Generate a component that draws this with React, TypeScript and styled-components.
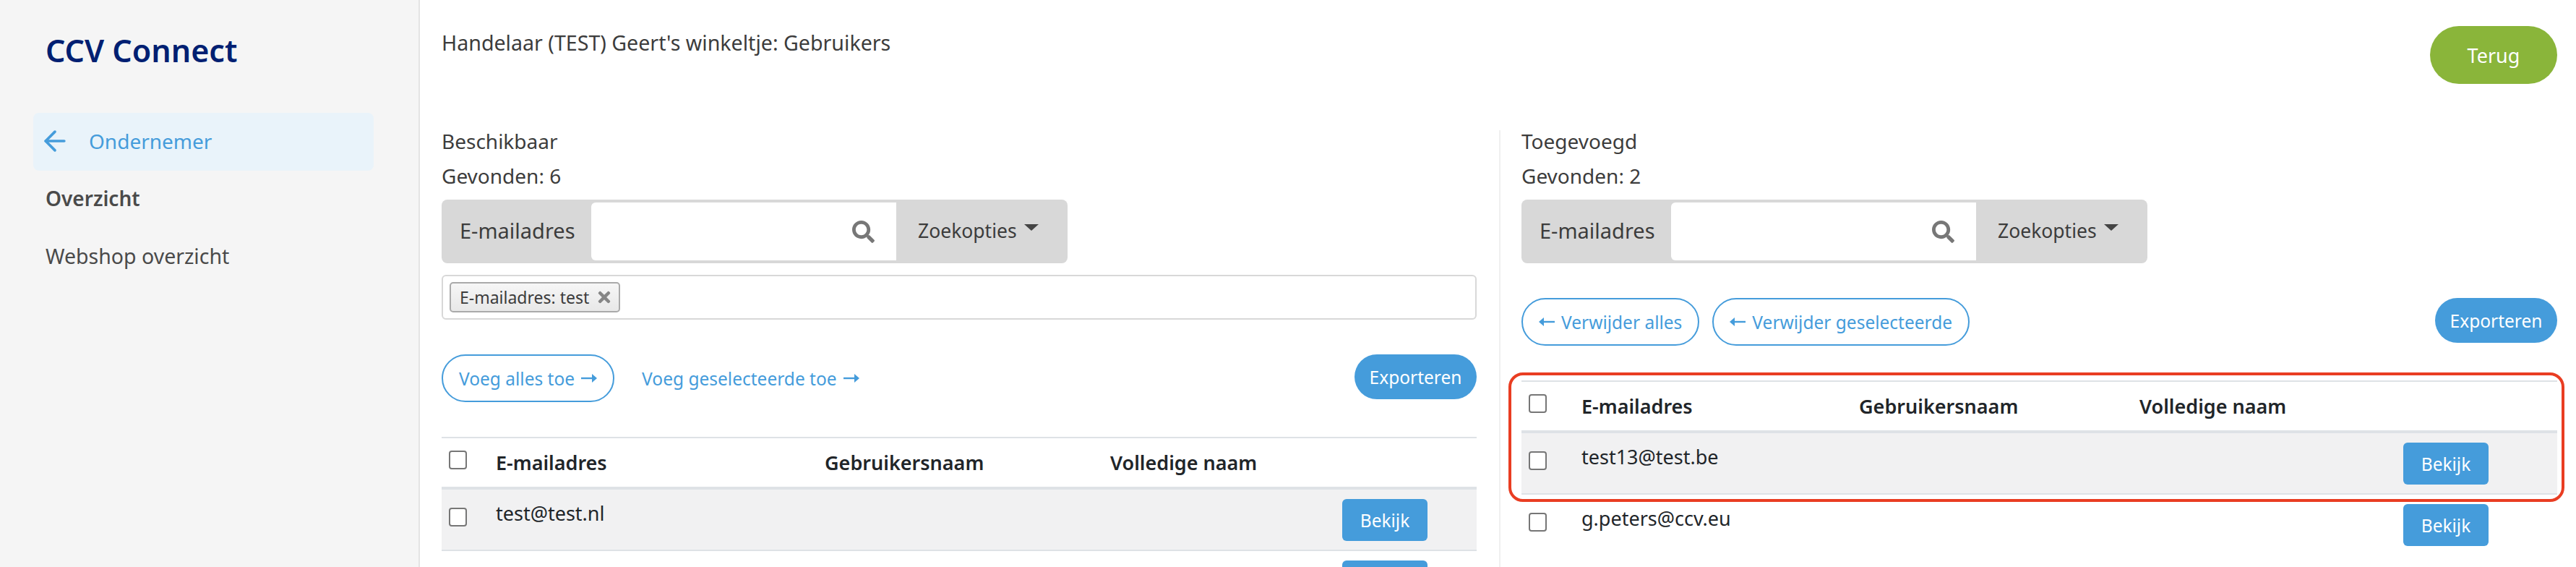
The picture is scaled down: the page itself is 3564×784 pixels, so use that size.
import React from 'react'
import styled, { createGlobalStyle } from 'styled-components'
import { FaSearch, FaTimes } from 'react-icons/fa'
import { ArrowLeft } from 'lucide-react'

const GlobalStyle = createGlobalStyle`
  * { box-sizing: border-box; }
  html, body { margin: 0; height: 100%; overflow: hidden; background: #fff; }
  body { font-family: "Noto Sans", "Open Sans", sans-serif; font-size: 28px; color: #3c3c3c; }
`

const Page = styled.div`
  display: flex;
  width: 3564px;
  height: 784px;
  overflow: hidden;
`

const Sidebar = styled.aside`
  flex: 0 0 581px;
  background: #f5f5f5;
  border-right: 2px solid #e4e4e4;
  padding: 45px 62px 0 46px;
  color: #4a4a4a;
`

const Brand = styled.h1`
  margin: 0 0 61px 17px;
  height: 50px;
  line-height: 50px;
  font-size: 43px;
  font-weight: 600;
  color: #001f72;
`

const BackItem = styled.div`
  display: flex;
  align-items: center;
  gap: 25px;
  height: 80px;
  padding: 0 0 3px 8px;
  border-radius: 8px;
  background: #e9f3fa;
  color: #459cdb;
`

const NavItem = styled.div<{ $bold?: boolean }>`
  height: 80px;
  line-height: 77px;
  padding-left: 17px;
  font-size: ${p => (p.$bold ? 28 : 28.5)}px;
  font-weight: ${p => (p.$bold ? 600 : 400)};
`

const Main = styled.main`
  flex: 1;
  padding: 36px 26px 0 30px;
`

const Header = styled.div`
  display: flex;
  justify-content: space-between;
  align-items: flex-start;
  height: 144px;
`

const Title = styled.div`
  padding-top: 4px;
  line-height: 38px;
  font-size: 28.6px;
`

const PrimaryPill = styled.button`
  width: 176px;
  height: 80px;
  border: 0;
  border-radius: 40px;
  background: #8ab53a;
  color: #fff;
  font: inherit;
  font-size: 27px;
`

const Columns = styled.div`
  display: flex;
  height: 604px;
`

const Panel = styled.section<{ $side: 'left' | 'right' }>`
  width: ${p => (p.$side === 'left' ? '1432px' : '1464px')};
  ${p => p.$side === 'left' && 'margin-right: 31px;'}
  ${p => p.$side === 'right' && 'border-left: 2px solid #f0f0f0; padding-left: 29px;'}
`

const Info = styled.div`
  height: 30px;
  line-height: 30px;
  margin-bottom: 18px;
`

const SearchGroup = styled.div`
  display: flex;
  align-items: stretch;
  width: 866px;
  height: 88px;
  padding: 4px 0;
  background: #d8d8d8;
  border-radius: 8px;
`

const SearchLabel = styled.div`
  display: flex;
  align-items: center;
  width: 207px;
  padding: 0 0 3px 25px;
  font-size: 29px;
`

const SearchField = styled.div`
  position: relative;
  display: flex;
  align-items: center;
  justify-content: flex-end;
  width: 422px;
  padding-right: 30px;
  background: #fff;
  border-radius: 6px 0 0 6px;
  color: #777;
  font-size: 31px;

  ::before {
    content: '';
    position: absolute;
    top: -2px;
    bottom: -2px;
    left: 0;
    width: 330px;
    border-top: 2px solid #e4e4e4;
    border-bottom: 2px solid #e4e4e4;
    border-radius: 6px 0 0 6px;
  }
`

const SearchOptions = styled.div`
  display: flex;
  align-items: center;
  gap: 10px;
  padding: 0 0 3px 30px;
  font-size: 26.5px;
`

const Caret = styled.span`
  width: 0;
  height: 0;
  margin-bottom: 8px;
  border-left: 10px solid transparent;
  border-right: 10px solid transparent;
  border-top: 9px solid #444;
`

const FilterBox = styled.div`
  display: flex;
  align-items: center;
  height: 62px;
  margin-top: 16px;
  padding-left: 9px;
  border: 2px solid #d8d8d8;
  border-radius: 6px;
`

const FilterTag = styled.div`
  display: flex;
  align-items: center;
  justify-content: space-between;
  width: 236px;
  height: 42px;
  padding: 0 8px 0 12px;
  border: 2px solid #aaa;
  border-radius: 5px;
  background: linear-gradient(#f6f6f6, #e8e8e8);
  font-size: 23px;
  color: #3c3c3c;

  svg {
    color: #858585;
    font-size: 24px;
  }
`

const Actions = styled.div`
  display: flex;
  align-items: flex-start;
  gap: 18px;
  height: 114px;
  margin-top: 48px;
`

const OutlinePill = styled.button`
  display: flex;
  align-items: center;
  gap: 9px;
  height: 66px;
  padding: 0 22px;
  border: 2px solid #459cdb;
  border-radius: 33px;
  background: #fff;
  color: #459cdb;
  font: inherit;
  font-size: 24.5px;
`

const LinkAction = styled.button`
  display: flex;
  align-items: center;
  gap: 9px;
  height: 66px;
  padding: 0 20px;
  border: 0;
  background: transparent;
  color: #459cdb;
  font: inherit;
  font-size: 24.5px;
`

const ExportPill = styled.button`
  width: 169px;
  height: 62px;
  margin-left: auto;
  border: 0;
  border-radius: 31px;
  background: #459cdb;
  color: #fff;
  font: inherit;
  font-size: 24.5px;
`

const TableFrame = styled.div`
  position: relative;
`

const Flag = styled.div`
  position: absolute;
  inset: -11px -10px -10px -18px;
  border: 4px solid #e93d22;
  border-radius: 20px;
  pointer-events: none;
`

const columns = {
  left: '65px 455px 395px 1fr 186px',
  right: '73px 384px 388px 1fr 213px',
}

type Side = keyof typeof columns

const Row = styled.div<{ $side: Side; $head?: boolean; $shade?: boolean; $plain?: boolean }>`
  display: grid;
  grid-template-columns: ${p => columns[p.$side]};
  height: ${p => (p.$head ? 73 : 85)}px;
  padding-left: 10px;
  padding-top: ${p => (p.$head ? 17 : 13)}px;
  border-top: ${p => (p.$head ? '2px solid #dee2e6' : '0')};
  border-bottom: ${p => (p.$head ? '4px solid #dee2e6' : p.$plain ? '0' : '2px solid #dee2e6')};
  background: ${p => (p.$shade ? '#f1f1f2' : '#fff')};
  color: #212529;
  font-size: 27px;
  font-weight: ${p => (p.$head ? 600 : 400)};
`

const Check = styled.span<{ $head?: boolean }>`
  display: block;
  width: 25px;
  height: 26px;
  margin-top: ${p => (p.$head ? 0 : 12)}px;
  border: 2px solid #767676;
  border-radius: 4px;
  background: #fff;
`

const Cell = styled.div<{ $head?: boolean }>`
  margin-top: ${p => (p.$head ? 2 : 5)}px;
  line-height: 30px;
`

const ViewButton = styled.button`
  width: 118px;
  height: 58px;
  border: 0;
  border-radius: 6px;
  background: #459cdb;
  color: #fff;
  font: inherit;
  font-size: 24.5px;
`

const ThinArrow = ({ flip }: { flip?: boolean }) => (
  <svg width="22" height="16" viewBox="0 0 22 16" style={flip ? { transform: 'scaleX(-1)' } : undefined}>
    <path d="M0 8h20" stroke="currentColor" strokeWidth="2.4" fill="none" />
    <path d="M15 2l7 6-7 6z" fill="currentColor" />
  </svg>
)

const Search = () => (
  <SearchGroup>
    <SearchLabel>E-mailadres</SearchLabel>
    <SearchField><FaSearch /></SearchField>
    <SearchOptions>Zoekopties <Caret /></SearchOptions>
  </SearchGroup>
)

const UserRow = ({ side, email, shade, plain }: { side: Side; email?: string; shade?: boolean; plain?: boolean }) => (
  <Row $side={side} $shade={shade} $plain={plain}>
    <Check />
    <Cell>{email}</Cell>
    <Cell />
    <Cell />
    <ViewButton>Bekijk</ViewButton>
  </Row>
)

const HeadRow = ({ side }: { side: Side }) => (
  <Row $side={side} $head>
    <Check $head />
    <Cell $head>E-mailadres</Cell>
    <Cell $head>Gebruikersnaam</Cell>
    <Cell $head>Volledige naam</Cell>
    <Cell $head />
  </Row>
)

const App = () => {
  return (
    <>
      <GlobalStyle />
      <Page>
        <Sidebar>
          <Brand>CCV Connect</Brand>
          <BackItem><ArrowLeft size={44} strokeWidth={2} />Ondernemer</BackItem>
          <NavItem $bold>Overzicht</NavItem>
          <NavItem>Webshop overzicht</NavItem>
        </Sidebar>
        <Main>
          <Header>
            <Title>Handelaar (TEST) Geert's winkeltje: Gebruikers</Title>
            <PrimaryPill>Terug</PrimaryPill>
          </Header>
          <Columns>
            <Panel $side="left">
              <Info>Beschikbaar</Info>
              <Info>Gevonden: 6</Info>
              <Search />
              <FilterBox>
                <FilterTag>E-mailadres: test <FaTimes /></FilterTag>
              </FilterBox>
              <Actions>
                <OutlinePill>Voeg alles toe <ThinArrow /></OutlinePill>
                <LinkAction>Voeg geselecteerde toe <ThinArrow /></LinkAction>
                <ExportPill>Exporteren</ExportPill>
              </Actions>
              <TableFrame>
                <HeadRow side="left" />
                <UserRow side="left" email="test@test.nl" shade />
                <UserRow side="left" plain />
              </TableFrame>
            </Panel>
            <Panel $side="right">
              <Info>Toegevoegd</Info>
              <Info>Gevonden: 2</Info>
              <Search />
              <Actions>
                <OutlinePill><ThinArrow flip /> Verwijder alles</OutlinePill>
                <OutlinePill><ThinArrow flip /> Verwijder geselecteerde</OutlinePill>
                <ExportPill>Exporteren</ExportPill>
              </Actions>
              <TableFrame>
                <Flag />
                <HeadRow side="right" />
                <UserRow side="right" email="test13@test.be" shade />
              </TableFrame>
              <UserRow side="right" email="g.peters@ccv.eu" plain />
            </Panel>
          </Columns>
        </Main>
      </Page>
    </>
  )
}

export default App
